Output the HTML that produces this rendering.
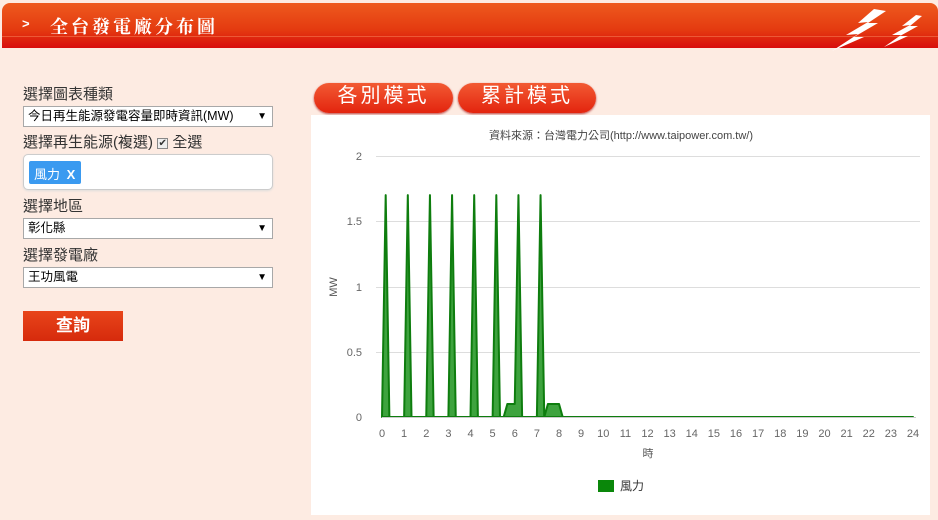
<!DOCTYPE html>
<html><head><meta charset="utf-8">
<style>
*{margin:0;padding:0;box-sizing:border-box}
body{width:938px;height:520px;background:#fdebe2;font-family:"Liberation Sans","Noto Sans CJK TC",sans-serif;position:relative;overflow:hidden;color:#333}
.hdr{position:absolute;left:2px;top:3px;width:936px;height:45px;border-radius:8px 8px 0 0;background:linear-gradient(#ee5a1e,#e43a10 60%,#d80d0d);}
.hdr .line{position:absolute;left:0;right:0;top:33px;height:1px;background:#f47a50;opacity:.6}
.title{position:absolute;left:48px;top:10px;font-family:"Noto Serif CJK SC",serif;color:#fff;font-size:18px;letter-spacing:3px;font-weight:bold}
.arrow{position:absolute;left:20px;top:13px;color:#fff;font-size:13px;font-weight:bold}
.lbl{position:absolute;left:23px;font-size:15px;color:#333}
.sel{position:absolute;left:23px;width:250px;height:21px;background:#fff;border:1px solid #a8a8a8;font-size:12.5px;padding:1px 0 0 4px;line-height:17px;color:#000}
.sel:after{content:"▼";position:absolute;right:5px;top:1px;font-size:10px}
.box{position:absolute;left:23px;top:154px;width:250px;height:36px;background:#fff;border:1px solid #ccc;border-radius:5px;box-shadow:0 1px 2px #ddd}
.tag{position:absolute;left:5px;top:6px;height:23px;width:52px;background:#3a9af0;border-radius:2px;color:#fff;font-size:13px;padding:3px 0 0 5px}
.btn{position:absolute;left:23px;top:311px;width:100px;height:30px;background:linear-gradient(#e8451a,#d62a0c);color:#fff;font-size:17px;font-weight:bold;text-align:center;line-height:30px}
.mode{position:absolute;top:83px;height:30px;border-radius:15px;background:linear-gradient(#f25a33,#e3240e);color:#fff;font-size:20px;text-align:center;line-height:27px;letter-spacing:3px;box-shadow:0 1px 2px #b44}
.panel{position:absolute;left:311px;top:115px;width:619px;height:400px;background:#fff}
</style></head><body>
<div class="hdr"><div class="line"></div>
<div class="arrow">&gt;</div><div class="title">全台發電廠分布圖</div>
<svg style="position:absolute;left:826px;top:4px" width="95" height="45" viewBox="0 0 95 45">
<polygon points="46,2 30,16 40,15 18,28 30,27 4,44 36,30 26,30 50,16 40,16 58,4" fill="#fff"/>
<polygon points="88,8 74,19 82,18 64,28 73,28 56,40 80,29 72,29 90,19 82,19 94,9" fill="#fff"/>
</svg>
</div>
<div class="lbl" style="top:83px">選擇圖表種類</div>
<div class="sel" style="top:106px">今日再生能源發電容量即時資訊(MW)</div>
<div class="lbl" style="top:131px">選擇再生能源(複選) <span style="display:inline-block;width:11px;height:11px;border:1px solid #888;background:#eee;font-size:10px;line-height:10px;text-align:center;vertical-align:1px">✔</span> 全選</div>
<div class="box"><div class="tag">風力 <b style="margin-left:3px">X</b></div></div>
<div class="lbl" style="top:195px">選擇地區</div>
<div class="sel" style="top:218px">彰化縣</div>
<div class="lbl" style="top:244px">選擇發電廠</div>
<div class="sel" style="top:267px">王功風電</div>
<div class="btn">查詢</div>
<div class="mode" style="left:314px;width:139px">各別模式</div>
<div class="mode" style="left:458px;width:138px">累計模式</div>
<div class="panel"></div>
<svg style="position:absolute;left:0;top:0" width="938" height="520" font-family="Liberation Sans,Noto Sans CJK TC,sans-serif">
<text x="621" y="139" font-size="11" fill="#444" text-anchor="middle">資料來源：台灣電力公司(http://www.taipower.com.tw/)</text>
<g stroke="#ddd" stroke-width="1">
<line x1="376" y1="156.5" x2="920" y2="156.5"/><line x1="376" y1="221.5" x2="920" y2="221.5"/>
<line x1="376" y1="287.5" x2="920" y2="287.5"/><line x1="376" y1="352.5" x2="920" y2="352.5"/>
</g>
<g font-size="11" fill="#666" text-anchor="end">
<text x="362" y="160">2</text><text x="362" y="225">1.5</text><text x="362" y="291">1</text><text x="362" y="356">0.5</text><text x="362" y="421">0</text>
</g>
<text x="337" y="287" font-size="11" fill="#555" transform="rotate(-90 337 287)" text-anchor="middle">MW</text>
<path d="M382,417 L385.69,195.15 L389.38,417 L404.13,417 L407.81,195.15 L411.5,417 L426.25,417 L429.94,195.15 L433.63,417 L448.38,417 L452.06,195.15 L455.75,417 L470.5,417 L474.19,195.15 L477.88,417 L492.63,417 L496.31,195.15 L500,417 L503.69,417 L507.38,403.95 L514.75,403.95 L518.44,195.15 L522.13,417 L536.88,417 L540.56,195.15 L544.25,417 L547.94,403.95 L559,403.95 L562.69,417 L913,417 Z" fill="#3ea33e" stroke="#0e7d0e" stroke-width="2" stroke-linejoin="round"/>
<line x1="382" y1="417.5" x2="916" y2="417.5" stroke="#ccc"/>
<g font-size="11" fill="#666" text-anchor="middle">
<text x="382" y="437">0</text><text x="404.1" y="437">1</text><text x="426.3" y="437">2</text><text x="448.4" y="437">3</text><text x="470.5" y="437">4</text><text x="492.6" y="437">5</text><text x="514.8" y="437">6</text><text x="536.9" y="437">7</text><text x="559" y="437">8</text><text x="581.1" y="437">9</text><text x="603.3" y="437">10</text><text x="625.4" y="437">11</text><text x="647.5" y="437">12</text><text x="669.6" y="437">13</text><text x="691.8" y="437">14</text><text x="713.9" y="437">15</text><text x="736" y="437">16</text><text x="758.1" y="437">17</text><text x="780.3" y="437">18</text><text x="802.4" y="437">19</text><text x="824.5" y="437">20</text><text x="846.6" y="437">21</text><text x="868.8" y="437">22</text><text x="890.9" y="437">23</text><text x="913" y="437">24</text>
</g>
<text x="648" y="457" font-size="11" fill="#555" text-anchor="middle">時</text>
<rect x="598" y="480" width="16" height="12" fill="#0a870a"/>
<text x="620" y="490" font-size="12" fill="#333">風力</text>
</svg>
</body></html>
